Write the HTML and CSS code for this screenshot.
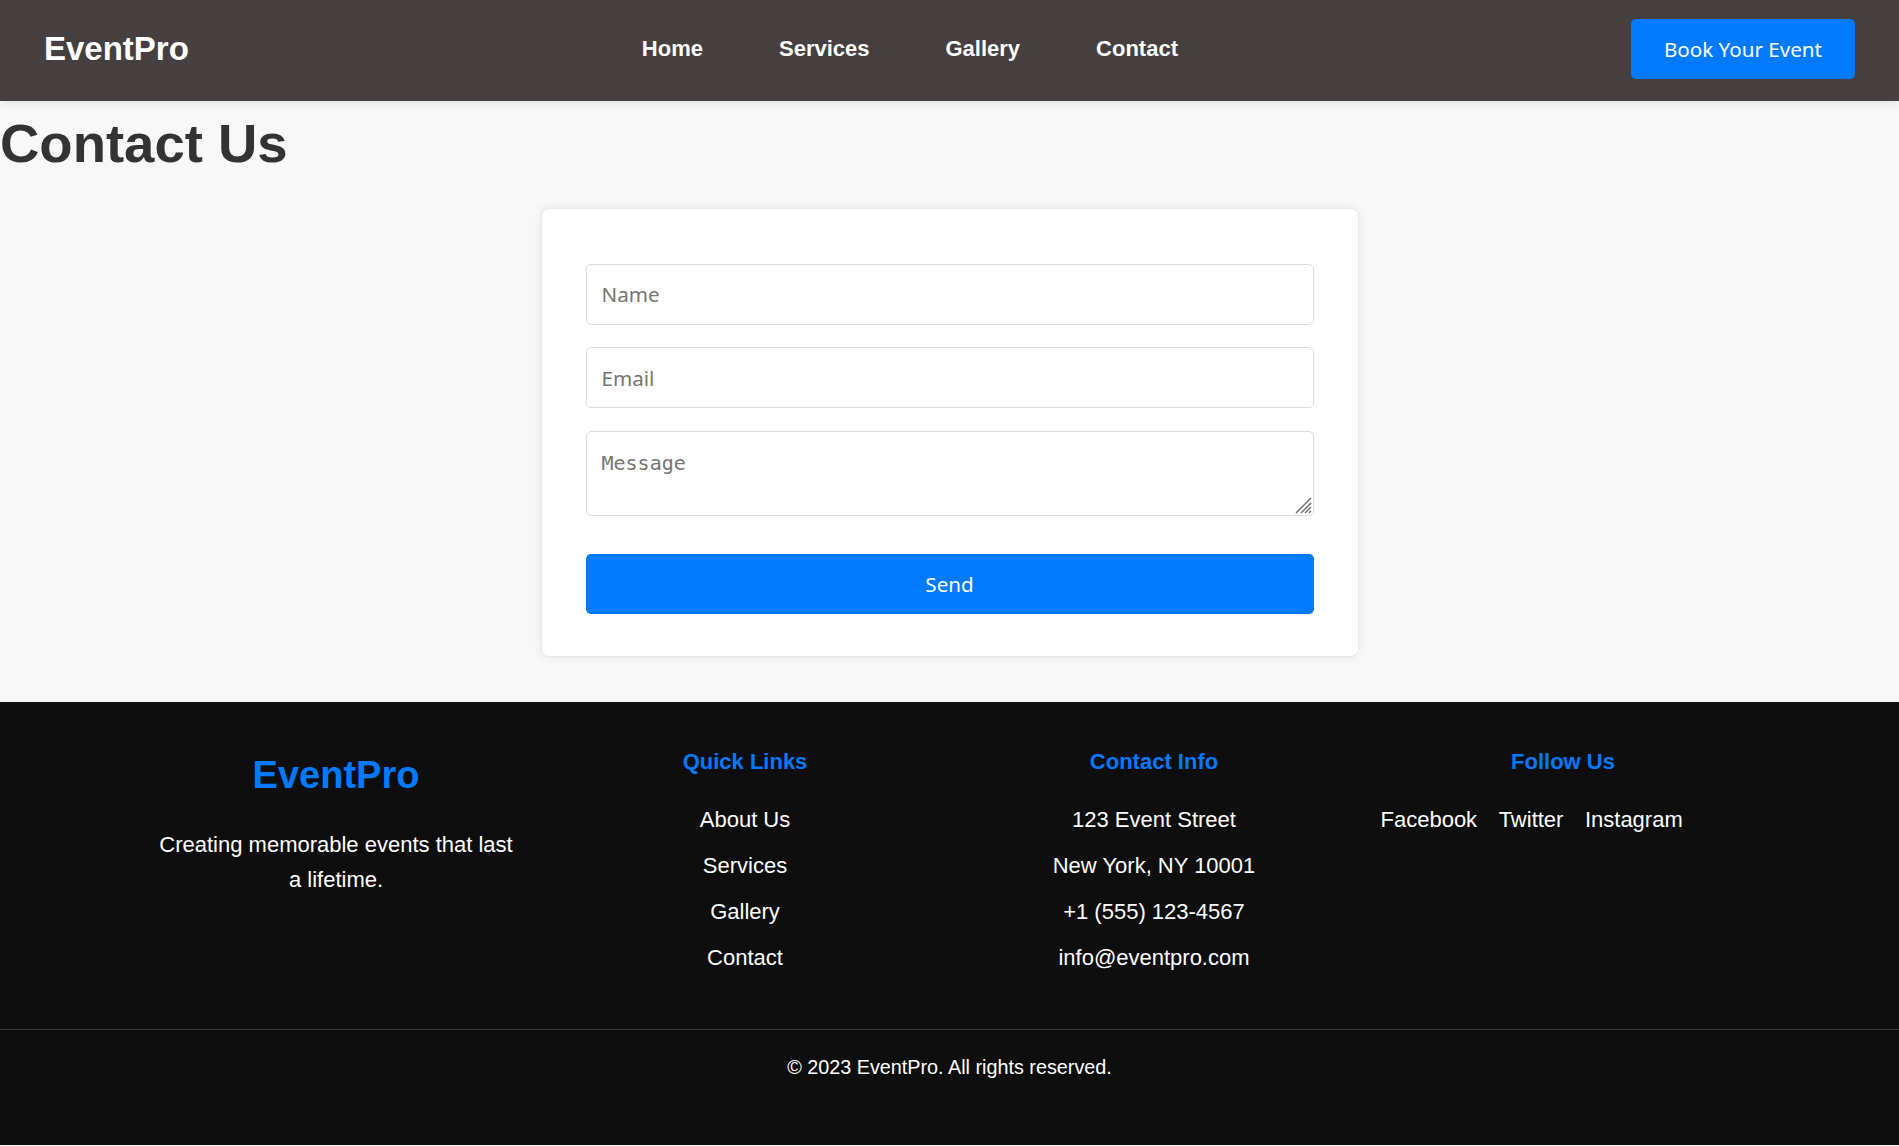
FILE: index.html
```html
<!DOCTYPE html>
<html lang="en">
<head>
<meta charset="UTF-8">
<title>EventPro - Contact</title>
<link rel="stylesheet" href="styles.css">
</head>
<body>
<header class="navbar">
  <div class="logo">EventPro</div>
  <ul class="nav-links">
    <li><a href="#">Home</a></li>
    <li><a href="#">Services</a></li>
    <li><a href="#">Gallery</a></li>
    <li><a href="#">Contact</a></li>
  </ul>
  <a class="btn-book" href="#">Book Your Event</a>
</header>

<main class="contact">
  <h1 class="page-title">Contact Us</h1>
  <div class="contact-card">
    <form class="contact-form">
      <input class="field" type="text" placeholder="Name">
      <input class="field" type="email" placeholder="Email">
      <div class="message-wrap">
        <textarea class="field field-message" placeholder="Message"></textarea>
        <svg class="resize-grip" width="18" height="18" viewBox="0 0 18 18" aria-hidden="true">
          <path d="M2 17 L17 2 M7 17 L17 7 M11 17 L17 11 M15 17 L17 15" stroke="#666" stroke-width="1.3" fill="none"/>
        </svg>
      </div>
      <button class="btn-send" type="button">Send</button>
    </form>
  </div>
</main>

<footer class="footer">
  <div class="footer-grid">
    <div class="footer-col">
      <h2 class="footer-logo">EventPro</h2>
      <p class="footer-desc">Creating memorable events that last a lifetime.</p>
    </div>
    <div class="footer-col">
      <h3 class="footer-title">Quick Links</h3>
      <ul class="footer-list">
        <li><a href="#">About Us</a></li>
        <li><a href="#">Services</a></li>
        <li><a href="#">Gallery</a></li>
        <li><a href="#">Contact</a></li>
      </ul>
    </div>
    <div class="footer-col">
      <h3 class="footer-title">Contact Info</h3>
      <ul class="footer-list">
        <li>123 Event Street</li>
        <li>New York, NY 10001</li>
        <li>+1 (555) 123-4567</li>
        <li>info@eventpro.com</li>
      </ul>
    </div>
    <div class="footer-col">
      <h3 class="footer-title">Follow Us</h3>
      <div class="social-links">
        <a href="#">Facebook</a>
        <a href="#">Twitter</a>
        <a href="#">Instagram</a>
      </div>
    </div>
  </div>
  <div class="footer-bottom">
    <p>&copy; 2023 EventPro. All rights reserved.</p>
  </div>
</footer>
</body>
</html>
```

FILE: styles.css
```css
* {
  box-sizing: border-box;
}

body {
  margin: 0;
  font-family: "Liberation Sans", Arial, sans-serif;
  background: #f8f8f8;
  color: #333;
}

a {
  text-decoration: none;
  color: inherit;
}

/* Navbar */
.navbar {
  height: 101px;
  padding: 0 44px 3px;
  display: flex;
  align-items: center;
  justify-content: space-between;
  background: #463f3f;
  box-shadow: 0 2px 10px rgba(0, 0, 0, 0.1);
  position: relative;
}

.logo {
  font-size: 33px;
  font-weight: bold;
  color: #fff;
}

.nav-links {
  list-style: none;
  margin: 0;
  padding: 0;
  display: flex;
  gap: 76px;
}

.nav-links a {
  font-size: 22px;
  font-weight: bold;
  color: #fff;
}

.btn-book {
  height: 60px;
  padding: 0 33px;
  display: inline-flex;
  align-items: center;
  background: #007bff;
  color: #fff;
  border-radius: 5px;
  font-family: "Noto Sans", sans-serif;
  font-size: 20.6px;
}

/* Main */
.page-title {
  margin: 10.5px 0 0;
  font-size: 54.5px;
  font-weight: bold;
  color: #333;
}

.contact-card {
  width: 818px;
  margin: 33px auto 45px;
  padding: 44px 44px 42px;
  background: #fff;
  border: 1px solid #e8e8e8;
  border-radius: 8px;
  box-shadow: 0 0 10px rgba(0, 0, 0, 0.08);
}

.contact-form {
  padding-top: 11px;
  display: flex;
  flex-direction: column;
}

.field {
  display: block;
  width: 100%;
  height: 61px;
  margin: 0 0 22.5px;
  padding: 0 15px;
  border: 1px solid #dcdcdc;
  border-radius: 5px;
  background: #fff;
  font-family: "Noto Sans", sans-serif;
  font-size: 20.6px;
  color: #333;
}

.field::placeholder {
  color: #757575;
}

.message-wrap {
  position: relative;
  margin-bottom: 38px;
}

.field-message {
  height: 85px;
  margin: 0;
  padding: 15px;
  font-family: "DejaVu Sans Mono", monospace;
  font-size: 20px;
  line-height: 32px;
  resize: none;
}

.resize-grip {
  position: absolute;
  right: 2px;
  bottom: 2px;
  pointer-events: none;
}

.btn-send {
  height: 60px;
  width: 100%;
  border: none;
  border-radius: 5px;
  background: #007bff;
  color: #fff;
  font-family: "Noto Sans", sans-serif;
  font-size: 20.6px;
  cursor: pointer;
}

/* Footer */
.footer {
  background: #0e0e0e;
  color: #fff;
  padding-top: 47px;
}

.footer-grid {
  width: 1592px;
  margin: 0 auto;
  display: grid;
  grid-template-columns: repeat(4, 1fr);
  gap: 44px;
  align-items: start;
}

.footer-col {
  text-align: center;
}

.footer-logo {
  margin: 5.5px 0 0;
  font-size: 38px;
  font-weight: bold;
  color: #007bff;
}

.footer-desc {
  margin: 29.5px 0 0;
  font-size: 22px;
  line-height: 35.2px;
}

.footer-title {
  margin: 0;
  font-size: 22px;
  font-weight: bold;
  color: #007bff;
}

.footer-list {
  list-style: none;
  margin: 27.5px 0 0;
  padding: 0;
  display: flex;
  flex-direction: column;
  gap: 10.8px;
  font-size: 22px;
  line-height: 35.2px;
}

.social-links {
  margin-top: 27.5px;
  display: flex;
  gap: 21.5px;
  font-size: 22px;
  line-height: 35.2px;
}

.footer-bottom {
  margin-top: 54px;
  border-top: 1px solid #3a3a3a;
  padding: 22px 0 61px;
  text-align: center;
}

.footer-bottom p {
  margin: 0;
  font-size: 19.8px;
  line-height: 31.7px;
}
```
